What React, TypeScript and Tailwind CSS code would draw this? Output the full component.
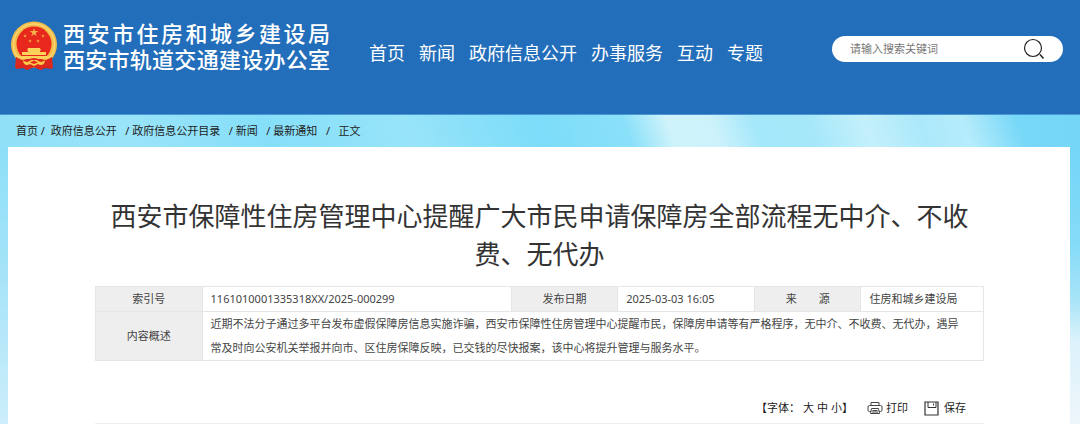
import type { FC } from 'react';

interface Crumb {
  label: string;
  href: string;
  separator: string;
}

const NAV_ITEMS = ['首页', '新闻', '政府信息公开', '办事服务', '互动', '专题'];

const CRUMBS: Crumb[] = [
  { label: '首页', href: '#home', separator: ' /  ' },
  { label: '政府信息公开', href: '#open', separator: '   / ' },
  { label: '政府信息公开目录', href: '#catalog', separator: '   / ' },
  { label: '新闻', href: '#news', separator: '   / ' },
  { label: '最新通知', href: '#notice', separator: '   /   ' },
];

const STAR =
  'M0,-1L0.225,-0.309L0.951,-0.309L0.363,0.118L0.588,0.809L0,0.382L-0.588,0.809L-0.363,0.118L-0.951,-0.309L-0.225,-0.309Z';

const Emblem: FC = () => (
  <svg viewBox="0 0 48 50" className="h-[50px] w-12 shrink-0" aria-hidden="true">
    <path d="M7 33 6 48 13 47 17 49 24 46 31 49 35 47 42 48 41 33Z" fill="#d8261c" />
    <circle cx="24" cy="23.5" r="23" fill="#f2bd48" />
    <circle cx="24" cy="23.5" r="20.5" fill="none" stroke="#fad672" strokeWidth="1.5" />
    <circle cx="24" cy="23" r="17.5" fill="#e8281c" />
    <g fill="#f6b04a">
      <path d={STAR} transform="translate(24 11.5) scale(4.6)" />
      <path d={STAR} transform="translate(15 15) scale(2)" />
      <path d={STAR} transform="translate(33 15) scale(2)" />
      <path d={STAR} transform="translate(20 20) scale(2)" />
      <path d={STAR} transform="translate(28 20) scale(2)" />
    </g>
    <path d="M18 27h12l1 2.5H17zM18 29.500h12V31h6v3h-24v-3h6zM8 35h32l-3 3H11z" fill="#fbd35a" />
    <path
      d="M6 36 12 39 19 38 24 37 29 38 36 39 42 36 43 47 36 45 31 49 24 46 17 49 12 45 5 47Z"
      fill="#dc281d"
    />
    <path
      d="M13 39c3 3 6 2 8 0h6c2 2 5 3 8 0 0 5-4 6-7 4l-4 2-4-2c-3 2-7 1-7-4z"
      fill="#f9cb4c"
    />
    <path d="M20 41.500 24 39.500 28 41.500 24 43Z" fill="#e8281c" />
  </svg>
);

const SearchIcon: FC = () => (
  <svg viewBox="0 0 22 22" className="size-[22px]" fill="none" stroke="#222" aria-hidden="true">
    <circle cx="10" cy="10" r="8.5" strokeWidth="1.2" />
    <path d="M17 16.5 20.5 20.5" strokeWidth="1.5" />
  </svg>
);

const PrintIcon: FC = () => (
  <svg viewBox="0 0 16 14" className="h-[14px] w-4" fill="none" stroke="#444" aria-hidden="true">
    <path d="M4 4.500V1.500h8v3M4 10.500H2.500a1.500 1.500 0 0 1-1.500-1.500V6a1.500 1.500 0 0 1 1.500-1.500h11A1.500 1.500 0 0 1 15 6v3a1.500 1.500 0 0 1-1.500 1.500H12" />
    <path d="M4.500 7.500h7l1 5h-9zM5.500 9.500h5M5 11h6" />
  </svg>
);

const SaveIcon: FC = () => (
  <svg viewBox="0 0 15 15" className="size-[15px]" fill="none" stroke="#333" aria-hidden="true">
    <path d="M1 1h13v13H1z" strokeWidth="1.2" />
    <path d="M4 1v5.500h8V1M9.500 2.500v2" />
  </svg>
);

const Header: FC = () => (
  <header className="flex h-[115px] items-start border-b border-[#4b97d6] bg-[#226eba] pr-[17px] pl-[10px] text-white">
    <a href="#home" className="mt-5 flex shrink-0 items-center gap-[5px]">
      <Emblem />
      <span className="w-[267px] text-[22px] leading-[26px] font-medium whitespace-nowrap">
        <span className="block [text-align-last:justify]">西安市住房和城乡建设局</span>
        <span className="block [text-align-last:justify]">西安市轨道交通建设办公室</span>
      </span>
    </a>
    <nav className="mt-10 ml-[39px] flex shrink-0 gap-[14px] text-[18px] leading-[26px]">
      {NAV_ITEMS.map((item) => (
        <a key={item} href={`#${item}`}>
          {item}
        </a>
      ))}
    </nav>
    <form
      role="search"
      className="mt-9 ml-auto flex h-[26px] w-[231px] items-center rounded-full bg-white px-[18px]"
    >
      <input
        type="search"
        aria-label="请输入搜索关键词"
        placeholder="请输入搜索关键词"
        className="min-w-0 flex-1 bg-transparent text-[11px] text-[#333] outline-none placeholder:text-[#777]"
      />
      <button type="button" aria-label="搜索">
        <SearchIcon />
      </button>
    </form>
  </header>
);

const Breadcrumb: FC = () => (
  <nav
    aria-label="面包屑"
    className="flex h-8 items-center bg-[linear-gradient(70deg,#8fe0f8,#9ae4f9_12%,#86dff9_25%,#97e4f9_38%,#7cdcf9_50%,#8ae0f9_58%,#d0f3fb_62%,#cdf2fb_66%,#a3e7fa_70%,#a6e8fa_75%,#c4f0fb_80%,#abe9fa_85%,#b6ecfb_89%,#78d8f8_94%,#74d6f7)] pl-4 text-[11px] text-[#222]"
  >
    {CRUMBS.map(({ label, href, separator }) => (
      <span key={href} className="whitespace-pre">
        <a href={href}>{label}</a>
        {separator}
      </span>
    ))}
    <span>正文</span>
  </nav>
);

const InfoTable: FC = () => (
  <table className="mt-[13px] w-full table-fixed border-collapse text-[11px] leading-6 text-[#444] [&_td]:border [&_td]:border-[#e6e6e6] [&_td]:px-2 [&_th]:border [&_th]:border-[#e6e6e6] [&_th]:bg-[#eee] [&_th]:font-normal">
    <colgroup>
      <col className="w-[12%]" />
      <col />
      <col className="w-[12%]" />
      <col className="w-[15.4%]" />
      <col className="w-[12%]" />
      <col className="w-[13.8%]" />
    </colgroup>
    <tbody>
      <tr>
        <th scope="row">索引号</th>
        <td>1161010001335318XX/2025-000299</td>
        <th scope="row">发布日期</th>
        <td>2025-03-03 16:05</td>
        <th scope="row">来&emsp;&emsp;源</th>
        <td>住房和城乡建设局</td>
      </tr>
      <tr>
        <th scope="row">内容概述</th>
        <td colSpan={5}>
          近期不法分子通过多平台发布虚假保障房信息实施诈骗，西安市保障性住房管理中心提醒市民，保障房申请等有严格程序，无中介、不收费、无代办，遇异
          <br />
          常及时向公安机关举报并向市、区住房保障反映，已交钱的尽快报案，该中心将提升管理与服务水平。
        </td>
      </tr>
    </tbody>
  </table>
);

const Toolbar: FC = () => (
  <div className="mt-[34px] flex items-center justify-end border-b border-[#eee] pr-[18px] pb-[2px] text-[11px] leading-[26px] text-[#222]">
    <div className="flex gap-[3px]">
      <span>【字体：</span>
      <button type="button">大</button>
      <button type="button">中</button>
      <span>
        <button type="button">小</button>】
      </span>
    </div>
    <button type="button" className="ml-[14px] flex items-center gap-[3px]">
      <PrintIcon />
      打印
    </button>
    <button type="button" className="ml-4 flex items-center gap-[5px]">
      <SaveIcon />
      保存
    </button>
  </div>
);

export default function App() {
  return (
    <div
      lang="zh-CN"
      className="min-h-screen bg-[#dff3fb] font-['Noto_Sans','Noto_Sans_CJK_SC',sans-serif]"
    >
      <Header />
      <Breadcrumb />
      <div className="bg-[linear-gradient(to_bottom,#8de0f8,#a5e3f8_45%,#cdeefa),linear-gradient(to_bottom,#74d6f7,#84dbf8_35%,#a8e4f8_55%,#dcf2fb_70%,#eef6fb)] bg-[length:50%_100%] bg-[position:left,right] bg-no-repeat pr-[10px] pl-2">
        <main className="min-h-[277px] bg-white pt-[50px] pr-[86px] pl-[87px]">
          <h1 className="px-3 text-center text-[26px] leading-[38px] text-[#333]">
            西安市保障性住房管理中心提醒广大市民申请保障房全部流程无中介、不收费、无代办
          </h1>
          <InfoTable />
          <Toolbar />
        </main>
      </div>
    </div>
  );
}
